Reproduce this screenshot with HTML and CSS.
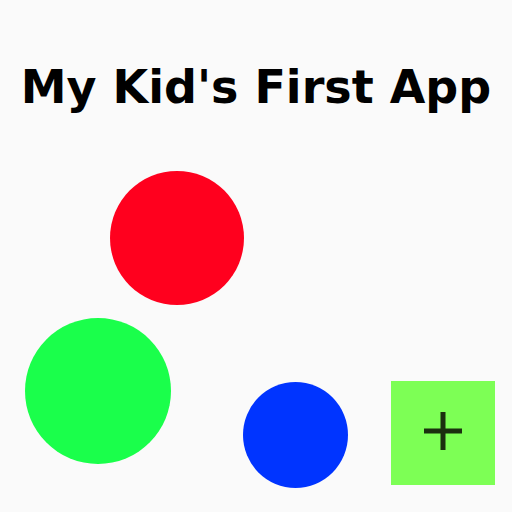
FILE: index.html
```html
<!DOCTYPE html>
<html lang="en">
<head>
<meta charset="utf-8">
<title>My Kid's First App</title>
<link rel="stylesheet" href="styles.css">
</head>
<body>
<main class="app">
  <h1 class="title">My Kid's First App</h1>
  <div class="canvas">
    <div class="ball ball-red"></div>
    <div class="ball ball-green"></div>
    <div class="ball ball-blue"></div>
    <button class="add-btn" aria-label="Add">
      <svg width="38" height="38" viewBox="0 0 38 38"><rect x="0" y="16.5" width="38" height="5" fill="#1b300f"/><rect x="16.5" y="0" width="5" height="38" fill="#1b300f"/></svg>
    </button>
  </div>
</main>
</body>
</html>
```
FILE: styles.css
```css
html, body {
  margin: 0;
  padding: 0;
  background: #fafafa;
}
.app {
  width: 512px;
  height: 512px;
  position: relative;
  overflow: hidden;
  font-family: "DejaVu Sans", "Liberation Sans", sans-serif;
}
.title {
  margin: 0;
  padding-top: 59px;
  text-align: center;
  font-size: 46px;
  font-weight: bold;
  line-height: 56px;
  color: #000;
}
.canvas {
  position: absolute;
  left: 0;
  top: 0;
  width: 512px;
  height: 512px;
}
.ball {
  position: absolute;
  border-radius: 50%;
}
.ball-red {
  left: 110px;
  top: 171px;
  width: 134px;
  height: 134px;
  background: #ff001e;
}
.ball-green {
  left: 25px;
  top: 318px;
  width: 146px;
  height: 146px;
  background: #1aff4b;
}
.ball-blue {
  left: 243px;
  top: 382px;
  width: 105px;
  height: 106px;
  background: #0034ff;
}
.add-btn {
  position: absolute;
  left: 391px;
  top: 381px;
  width: 104px;
  height: 104px;
  border: 0;
  padding: 0;
  margin: 0;
  background: #7dff55;
  display: flex;
  align-items: center;
  justify-content: center;
}
.add-btn svg {
  display: block;
  margin-top: -4px;
}
```
